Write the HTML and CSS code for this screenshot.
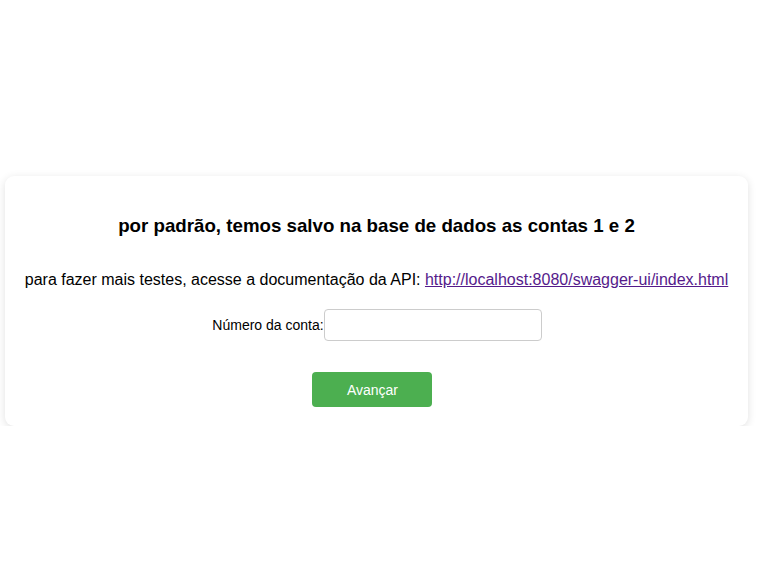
FILE: index.html
```html
<!DOCTYPE html>
<html lang="pt-BR">
<head>
<meta charset="utf-8">
<title>Conta</title>
<link rel="stylesheet" href="styles.css">
</head>
<body>
<div class="page">
  <div class="card">
    <h2 class="title">por padrão, temos salvo na base de dados as contas 1 e 2</h2>
    <p class="info">para fazer mais testes, acesse a documentação da API: <a class="link" href="#">http://localhost:8080/swagger-ui/index.html</a></p>
    <form class="form">
      <div class="row">
        <label class="label" for="conta">Número da conta:</label>
        <input class="input" id="conta" type="text">
      </div>
      <button class="btn" type="button">Avançar</button>
    </form>
  </div>
</div>
</body>
</html>
```
FILE: styles.css
```css
html, body {
  margin: 0;
  padding: 0;
  background: #ffffff;
  font-family: "Liberation Sans", Arial, sans-serif;
  color: #000;
}
.page {
  padding: 176px 0 0 5px;
}
.card {
  box-sizing: border-box;
  width: 743px;
  height: 250px;
  background: #fff;
  border-radius: 9px;
  box-shadow: 0 2px 8px rgba(0, 0, 0, 0.12);
  padding: 39px 0 0;
  display: flex;
  flex-direction: column;
  align-items: center;
}
.title {
  margin: 0;
  font-size: 18.72px;
  line-height: 22px;
  font-weight: bold;
}
.info {
  margin: 34px 0 0;
  font-size: 16px;
  line-height: 18px;
}
.link {
  color: #551a8b;
  text-decoration: underline;
}
.form {
  margin: 20px 0 0;
  display: flex;
  flex-direction: column;
  align-items: center;
}
.row {
  display: flex;
  align-items: center;
  margin-left: 1px;
}
.label {
  font-size: 14px;
  line-height: 16px;
}
.input {
  box-sizing: border-box;
  width: 218px;
  height: 32px;
  border: 1px solid #cccccc;
  border-radius: 4px;
  padding: 0 8px;
  font-size: 14px;
  background: #fff;
  margin: 0;
}
.btn {
  margin: 31px 8px 0 0;
  width: 120px;
  height: 35px;
  border: none;
  border-radius: 4px;
  background: #4caf50;
  color: #fff;
  font-family: "Liberation Sans", Arial, sans-serif;
  font-size: 14px;
  cursor: pointer;
}
```
